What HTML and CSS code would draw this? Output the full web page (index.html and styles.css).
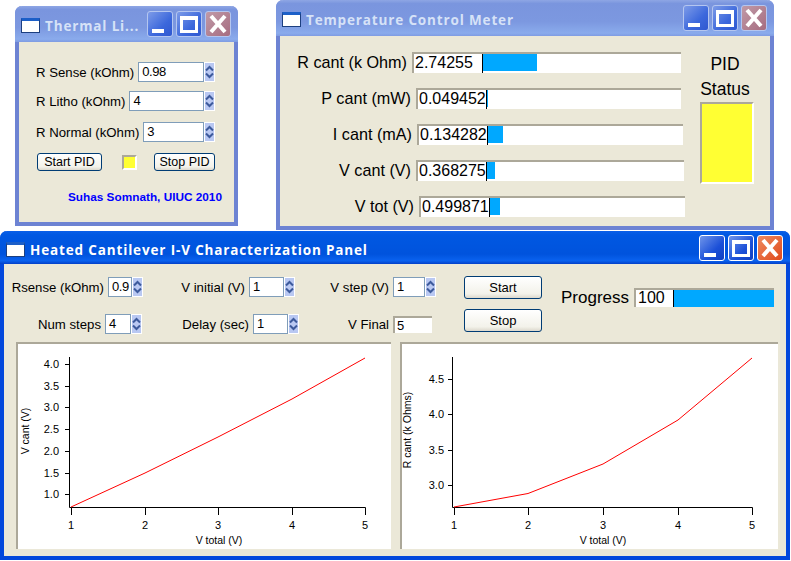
FILE: index.html
```html
<!DOCTYPE html>
<html lang="en">
<head>
    <meta charset="UTF-8">
    <meta name="viewport" content="width=device-width, initial-scale=1.0">
    <title>Heated Cantilever Panels</title>
    <link rel="stylesheet" href="styles.css">
</head>
<body>
    <svg class="defs" width="0" height="0">
        <symbol id="up" viewBox="0 0 9 7"><path d="M1 5.5 4.5 2 8 5.5" fill="none" stroke="#3d5a9c" stroke-width="2"/></symbol>
        <symbol id="close" viewBox="0 0 26 26"><path d="M6 5 20 21M20 5 6 21" fill="none" stroke="#fff" stroke-width="4"/></symbol>
    </svg>

    <div class="desktop">
        <!-- thermal lithography window -->
        <div class="win inactive win-litho">
            <div class="titlebar">
                <span class="app-icon"></span>
                <span class="title">Thermal Li...</span>
                <div class="caption-btns">
                    <span class="cap-btn cap-min"></span>
                    <span class="cap-btn cap-max"></span>
                    <span class="cap-btn cap-close"><svg width="26" height="26"><use href="#close"/></svg></span>
                </div>
            </div>
            <div class="body litho-body">
                <div class="litho-row">
                    <label>R Sense (kOhm)</label>
                    <span class="input grow">0.98</span>
                    <span class="spin"><svg width="9" height="7"><use href="#up"/></svg><svg class="down" width="9" height="7"><use href="#up"/></svg></span>
                </div>
                <div class="litho-row row-tight">
                    <label>R Litho (kOhm)</label>
                    <span class="input grow">4</span>
                    <span class="spin"><svg width="9" height="7"><use href="#up"/></svg><svg class="down" width="9" height="7"><use href="#up"/></svg></span>
                </div>
                <div class="litho-row row-wide">
                    <label>R Normal (kOhm)</label>
                    <span class="input grow">3</span>
                    <span class="spin"><svg width="9" height="7"><use href="#up"/></svg><svg class="down" width="9" height="7"><use href="#up"/></svg></span>
                </div>
                <div class="litho-actions">
                    <button class="btn btn-small btn-start">Start PID</button>
                    <span class="led"></span>
                    <button class="btn btn-small btn-stop">Stop PID</button>
                </div>
                <div class="credit">Suhas Somnath, UIUC 2010</div>
            </div>
        </div>

        <!-- temperature meter window -->
        <div class="win inactive win-meter">
            <div class="titlebar">
                <span class="app-icon"></span>
                <span class="title">Temperature Control Meter</span>
                <div class="caption-btns">
                    <span class="cap-btn cap-min"></span>
                    <span class="cap-btn cap-max"></span>
                    <span class="cap-btn cap-close"><svg width="26" height="26"><use href="#close"/></svg></span>
                </div>
            </div>
            <div class="body meter-body">
                <div class="meters">
                    <div class="meter meter-1">
                        <label>R cant (k Ohm)</label>
                        <div class="gauge"><span class="gauge-val">2.74255</span><span class="gauge-fill" style="width:54px"></span></div>
                    </div>
                    <div class="meter meter-2">
                        <label>P cant (mW)</label>
                        <div class="gauge"><span class="gauge-val">0.049452</span><span class="gauge-fill" style="width:1px"></span></div>
                    </div>
                    <div class="meter meter-3">
                        <label>I cant (mA)</label>
                        <div class="gauge"><span class="gauge-val">0.134282</span><span class="gauge-fill" style="width:15px"></span></div>
                    </div>
                    <div class="meter meter-4">
                        <label>V cant (V)</label>
                        <div class="gauge"><span class="gauge-val">0.368275</span><span class="gauge-fill" style="width:8px"></span></div>
                    </div>
                    <div class="meter meter-5">
                        <label>V tot (V)</label>
                        <div class="gauge"><span class="gauge-val">0.499871</span><span class="gauge-fill" style="width:10px"></span></div>
                    </div>
                </div>
                <div class="pid">
                    <div class="pid-text">PID</div>
                    <div class="pid-text">Status</div>
                    <div class="pid-box"></div>
                </div>
            </div>
        </div>

        <!-- main panel -->
        <div class="win active win-panel">
            <div class="titlebar">
                <span class="app-icon"></span>
                <span class="title">Heated Cantilever I-V Characterization Panel</span>
                <div class="caption-btns">
                    <span class="cap-btn cap-min"></span>
                    <span class="cap-btn cap-max"></span>
                    <span class="cap-btn cap-close"><svg width="26" height="26"><use href="#close"/></svg></span>
                </div>
            </div>
            <div class="body panel-body">
                <div class="controls">
                    <div class="ctl-col col-1">
                        <div class="ctl">
                            <label>Rsense (kOhm)</label>
                            <span class="input w-rsense">0.9</span>
                            <span class="spin"><svg width="9" height="7"><use href="#up"/></svg><svg class="down" width="9" height="7"><use href="#up"/></svg></span>
                        </div>
                        <div class="ctl shift-1">
                            <label>Num steps</label>
                            <span class="input w-steps">4</span>
                            <span class="spin"><svg width="9" height="7"><use href="#up"/></svg><svg class="down" width="9" height="7"><use href="#up"/></svg></span>
                        </div>
                    </div>
                    <div class="ctl-col col-2">
                        <div class="ctl shift-4">
                            <label>V initial (V)</label>
                            <span class="input w-num">1</span>
                            <span class="spin"><svg width="9" height="7"><use href="#up"/></svg><svg class="down" width="9" height="7"><use href="#up"/></svg></span>
                        </div>
                        <div class="ctl">
                            <label>Delay (sec)</label>
                            <span class="input w-num">1</span>
                            <span class="spin"><svg width="9" height="7"><use href="#up"/></svg><svg class="down" width="9" height="7"><use href="#up"/></svg></span>
                        </div>
                    </div>
                    <div class="ctl-col col-3">
                        <div class="ctl">
                            <label>V step (V)</label>
                            <span class="input w-step">1</span>
                            <span class="spin"><svg width="9" height="7"><use href="#up"/></svg><svg class="down" width="9" height="7"><use href="#up"/></svg></span>
                        </div>
                        <div class="ctl shift-4">
                            <label>V Final</label>
                            <span class="readout">5</span>
                        </div>
                    </div>
                    <div class="run-btns">
                        <button class="btn">Start</button>
                        <button class="btn">Stop</button>
                    </div>
                    <div class="progress">
                        <label>Progress</label>
                        <div class="progress-gauge"><span class="progress-val">100</span><span class="progress-fill"></span></div>
                    </div>
                </div>
                <div class="plots">
                    <div class="plot plot-left">
                        <svg width="373" height="205" viewBox="18 344 373 205">
                            <path class="axis" d="M69.5 357V507.5H365.5V515M71.5 507V515M145.5 507V515M218.5 507V515M292.5 507V515M65 364.5H69M65 386.5H69M65 407.5H69M65 429.5H69M65 451.5H69M65 473.5H69M65 494.5H69"/>
                            <polyline class="trace" points="71,507 145,473 218,437 292,399 365,358"/>
                            <g class="tick-y">
                                <text x="59" y="368">4.0</text><text x="59" y="390">3.5</text><text x="59" y="411">3.0</text><text x="59" y="433">2.5</text><text x="59" y="455">2.0</text><text x="59" y="477">1.5</text><text x="59" y="498">1.0</text>
                            </g>
                            <g class="tick-x">
                                <text x="71" y="529">1</text><text x="145" y="529">2</text><text x="218" y="529">3</text><text x="292" y="529">4</text><text x="365" y="529">5</text>
                            </g>
                            <text class="axis-title" x="219" y="544">V total (V)</text>
                            <text class="axis-title" transform="translate(29 431) rotate(-90)">V cant (V)</text>
                        </svg>
                    </div>
                    <div class="plot plot-right">
                        <svg width="376" height="205" viewBox="402 344 376 205">
                            <path class="axis" d="M452.5 357V507.5H752.5V515M454.5 507V515M528.5 507V515M603.5 507V515M678.5 507V515M448 379.5H452M448 414.5H452M448 450.5H452M448 485.5H452"/>
                            <polyline class="trace" points="454,507 528,493.5 603,464 678,420 752,358"/>
                            <g class="tick-y">
                                <text x="444" y="383">4.5</text><text x="444" y="418">4.0</text><text x="444" y="454">3.5</text><text x="444" y="489">3.0</text>
                            </g>
                            <g class="tick-x">
                                <text x="454" y="529">1</text><text x="528" y="529">2</text><text x="603" y="529">3</text><text x="678" y="529">4</text><text x="752" y="529">5</text>
                            </g>
                            <text class="axis-title" x="603" y="544">V total (V)</text>
                            <text class="axis-title" transform="translate(411 430) rotate(-90)">R cant (k Ohms)</text>
                        </svg>
                    </div>
                </div>
            </div>
        </div>
    </div>
</body>
</html>
```

FILE: styles.css
```css
* {
    box-sizing: border-box;
    margin: 0;
    padding: 0;
}
body {
    background: #fff;
    font-family: "Liberation Sans", Arial, sans-serif;
    color: #000;
    overflow: hidden;
}
.defs {
    position: absolute;
}
.desktop {
    position: relative;
    width: 791px;
    height: 561px;
}

/* windows */
.win {
    position: absolute;
    display: flex;
    flex-direction: column;
    border-radius: 7px 7px 0 0;
    border: 4px solid #6d83d3;
    border-top: none;
}
.win.active {
    border-color: #0348dc;
}
.win-litho {
    left: 15px;
    top: 6px;
    width: 223px;
    height: 220px;
}
.win-meter {
    left: 276px;
    top: 0;
    width: 498px;
    height: 230px;
}
.win-panel {
    left: 0;
    top: 231px;
    width: 790px;
    height: 329px;
}
.titlebar {
    display: flex;
    align-items: center;
    height: 36px;
    margin: 0 -4px;
    padding: 0 7px 0 6px;
    border-radius: 7px 7px 0 0;
    flex-shrink: 0;
}
.inactive .titlebar {
    background: linear-gradient(to bottom, #8ea6e4 0, #7a95de 10%, #7c98e0 60%, #8aabec 92%, #7f9be2 100%);
}
.active .titlebar {
    height: 33px;
    background: linear-gradient(to bottom, #0a5fe8 0, #0058e2 12%, #0053dd 70%, #0a62ef 90%, #0340c8 100%);
}
.app-icon {
    width: 19px;
    height: 15px;
    flex-shrink: 0;
    background: #fff;
    border: 1px solid #1c3f80;
    border-top: 3px solid #1c5fc8;
    margin-right: 5px;
    margin-top: 3px;
}
.title {
    font-family: "Open Sans", sans-serif;
    font-weight: 700;
    font-size: 13.5px;
    letter-spacing: 0.85px;
    white-space: nowrap;
    margin-top: 4px;
}
.inactive .title {
    color: #d6e2f7;
}
.active .title {
    color: #fff;
}
.caption-btns {
    display: flex;
    gap: 3px;
    margin-left: auto;
}
.cap-btn {
    position: relative;
    display: block;
    width: 26px;
    height: 26px;
    border: 1px solid #fff;
    border-radius: 3px;
    background: linear-gradient(135deg, #7d9be8, #3c68dc 60%, #2f58d0);
}
.inactive .cap-btn {
    border-color: #b4c6f0;
}
.active .cap-btn {
    background: linear-gradient(135deg, #6f95ea, #1c50d8 60%, #0f3fc0);
}
.cap-min::after {
    content: "";
    position: absolute;
    left: 4px;
    bottom: 3px;
    width: 12px;
    height: 4px;
    background: #fff;
}
.cap-max::after {
    content: "";
    position: absolute;
    left: 3px;
    top: 4px;
    width: 12px;
    height: 10px;
    border: 3px solid #fff;
    border-top-width: 4px;
}
.cap-close {
    background: linear-gradient(135deg, #c09aa8, #a66c80) !important;
}
.active .cap-close {
    background: linear-gradient(135deg, #ee8a60, #e04a1c) !important;
}
.cap-close svg {
    display: block;
    margin: -1px;
}
.body {
    flex: 1;
    background: #ebe8d8;
}

/* shared inputs */
label {
    font-size: 13.2px;
    white-space: nowrap;
}
.input {
    display: block;
    height: 20px;
    line-height: 18px;
    font-size: 13px;
    letter-spacing: -0.4px;
    padding-left: 3px;
    background: #fff;
    border: 1px solid #7f9db9;
}
.spin {
    display: flex;
    flex-direction: column;
    align-items: center;
    justify-content: center;
    flex-shrink: 0;
    width: 11px;
    height: 20px;
    background: #b9c8f2;
    border: 1px solid #fff;
}
.spin svg {
    display: block;
}
.spin .down {
    transform: scaleY(-1);
}
.btn {
    display: block;
    font-family: inherit;
    font-size: 13px;
    color: #000;
    width: 78px;
    height: 23px;
    background: linear-gradient(to bottom, #fff, #f3f2ea 80%, #dcd8cc);
    border: 1px solid #003c74;
    border-radius: 3px;
}

/* thermal litho window */
.litho-body {
    padding: 20px 19px 0 17px;
}
.litho-row {
    display: flex;
    align-items: center;
    gap: 4px;
}
.litho-row .spin {
    margin-left: -4px;
}
.litho-row .grow {
    flex: 1;
}
.row-tight {
    margin-top: 9px;
}
.row-wide {
    margin-top: 11px;
}
.litho-actions {
    display: flex;
    align-items: center;
    margin-top: 11px;
}
.btn-small {
    height: 18px;
    font-size: 12.5px;
}
.btn-start {
    width: 65px;
    margin-left: 1px;
}
.btn-stop {
    width: 61px;
    margin-left: 17px;
}
.led {
    width: 15px;
    height: 15px;
    margin-left: 20px;
    background: #ffff33;
    border: 2px solid #aca899;
    border-right-color: #fff;
    border-bottom-color: #fff;
}
.credit {
    margin-top: 19px;
    margin-right: -7px;
    text-align: right;
    font-size: 11.8px;
    font-weight: 700;
    color: #0000ff;
}

/* meter window */
.meter-body {
    display: flex;
    padding-top: 16px;
}
.meters {
    width: 406px;
    display: flex;
    flex-direction: column;
    gap: 15px;
}
.meter {
    display: flex;
    align-items: center;
    height: 21px;
}
.meter label {
    font-size: 16.2px;
    text-align: right;
    margin-right: 5px;
    flex-shrink: 0;
}
.meter-1 label { width: 127px; }
.meter-2 label { width: 131px; }
.meter-3 label { width: 132px; }
.meter-4 label { width: 131px; }
.meter-5 label { width: 134px; }
.meter-1 .gauge { width: 269px; }
.meter-2 .gauge { width: 265px; }
.meter-3 .gauge { width: 266px; }
.meter-4 .gauge { width: 268px; }
.meter-5 .gauge { width: 266px; }
.gauge {
    display: flex;
    height: 21px;
    background: #fff;
    border-top: 2px solid #aca899;
    border-left: 2px solid #aca899;
    flex-shrink: 0;
}
.gauge-val {
    font-size: 16px;
    line-height: 18px;
    padding-left: 1px;
    white-space: nowrap;
    border-right: 1px solid #000;
    width: 69px;
}
.gauge-fill {
    display: block;
    background: #00a8ff;
    height: 17px;
}
.pid {
    display: flex;
    flex-direction: column;
    align-items: center;
    margin-left: 12px;
    width: 58px;
}
.pid-text {
    font-size: 17.5px;
    line-height: 25px;
    margin-right: 4px;
}
.pid-box {
    width: 54px;
    height: 82px;
    background: #ffff33;
    border: 2px solid #aca899;
    border-right-color: #fff;
    border-bottom-color: #fff;
}

/* main panel */
.panel-body {
    padding: 13px 8px 0 12px;
}
.controls {
    display: flex;
    margin-left: -12px;
    height: 65px;
}
.ctl-col {
    display: flex;
    flex-direction: column;
    gap: 17px;
}
.col-1 { width: 139px; }
.col-2 { width: 156px; }
.col-3 { width: 137px; }
.ctl {
    display: flex;
    align-items: center;
    justify-content: flex-end;
    height: 20px;
}
.ctl label {
    margin-right: 4px;
}
.shift-1 { margin-right: 1px; }
.shift-4 { margin-right: 4px; }
.w-rsense { width: 24px; }
.w-steps { width: 26px; }
.w-num { width: 35px; }
.w-step { width: 32px; }
.readout {
    display: block;
    width: 39px;
    height: 17px;
    line-height: 15px;
    font-size: 13px;
    padding-left: 2px;
    background: #fff;
    border-top: 2px solid #aca899;
    border-left: 2px solid #aca899;
}
.run-btns {
    display: flex;
    flex-direction: column;
    gap: 10px;
    margin-left: 28px;
    margin-top: -1px;
}
.progress {
    display: flex;
    align-items: center;
    height: 19px;
    margin-top: 11px;
    margin-left: 19px;
}
.progress label {
    font-size: 17px;
    margin-right: 5px;
}
.progress-gauge {
    display: flex;
    width: 140px;
    height: 19px;
    background: #fff;
    border-top: 2px solid #aca899;
    border-left: 2px solid #aca899;
}
.progress-val {
    width: 38px;
    font-size: 16px;
    line-height: 16px;
    padding-left: 2px;
    border-right: 1px solid #000;
}
.progress-fill {
    flex: 1;
    background: #00a8ff;
}
.plots {
    display: flex;
    gap: 9px;
    margin-top: 0;
}
.plot {
    height: 207px;
    background: #fff;
    border-top: 2px solid #aca899;
    border-left: 2px solid #aca899;
}
.plot-left { width: 375px; }
.plot-right { width: 378px; }
.plot svg {
    display: block;
}
.axis {
    fill: none;
    stroke: #000;
    stroke-width: 1;
}
.trace {
    fill: none;
    stroke: #f00;
    stroke-width: 1;
}
.plot text {
    font-family: "Liberation Sans", Arial, sans-serif;
    font-size: 11px;
    fill: #000;
}
.tick-y text {
    text-anchor: end;
}
.tick-x text,
.plot .axis-title {
    text-anchor: middle;
}
.plot .axis-title {
    font-size: 10.5px;
}
```
